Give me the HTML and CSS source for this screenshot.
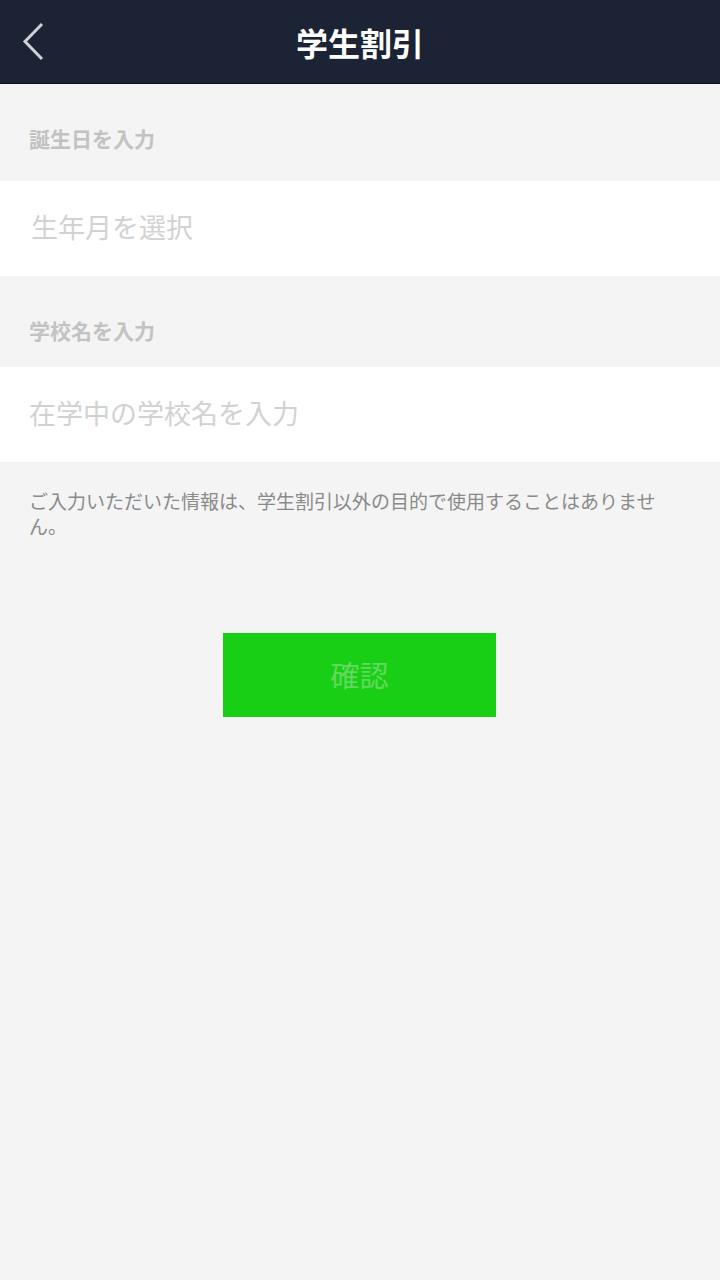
FILE: index.html
```html
<!DOCTYPE html>
<html lang="ja">
<head>
<meta charset="utf-8">
<link rel="stylesheet" href="styles.css">
</head>
<body>
<header class="topbar">
  <svg class="back" width="24" height="40" viewBox="0 0 24 40"><polyline points="20,3 3,20.5 20,38" fill="none" stroke="#cfd1d6" stroke-width="3"/></svg>
  <h1 class="title">学生割引</h1>
</header>
<main>
  <div class="label label-first">誕生日を入力</div>
  <div class="field">生年月を選択</div>
  <div class="label label-second">学校名を入力</div>
  <div class="field field-school">在学中の学校名を入力</div>
  <p class="notice">ご入力いただいた情報は、学生割引以外の目的で使用することはありません。</p>
  <div class="actions"><button class="confirm">確認</button></div>
</main>
</body>
</html>
```
FILE: styles.css
```css
html, body { margin: 0; padding: 0; }
body {
  width: 720px;
  height: 1280px;
  background: #f4f4f4;
  font-family: "Noto Sans CJK JP", "Noto Sans", sans-serif;
}
.topbar {
  position: relative;
  height: 83px;
  background: #1b2334;
  border-bottom: 1px solid #0c1220;
  display: flex;
  align-items: center;
  justify-content: center;
}
.back {
  position: absolute;
  left: 22px;
  top: 21px;
}
.title {
  margin: 0;
  color: #ffffff;
  font-size: 32px;
  font-weight: 700;
  line-height: 40px;
}
.label {
  padding: 0 29px;
  color: #c2c2c2;
  font-size: 21px;
  font-weight: 700;
  line-height: 24px;
  padding-top: 42px;
}
.label-first { height: 55px; }
.label-second { height: 49px; }
.field {
  height: 95px;
  background: #ffffff;
  display: flex;
  align-items: center;
  padding: 0 31px 4px;
  box-sizing: border-box;
  color: #d2d2d2;
  font-size: 27px;
}
.field-school { padding-left: 29px; }
.notice {
  margin: 0;
  padding: 26px 29px 0;
  max-width: 640px;
  color: #8a8a8a;
  font-size: 19px;
  line-height: 25px;
}
.actions {
  display: flex;
  justify-content: center;
  padding-top: 95px;
}
.confirm {
  width: 273px;
  height: 84px;
  margin-left: -1px;
  border: none;
  background: #19cf15;
  color: #62d95e;
  font-family: inherit;
  font-size: 29px;
  padding: 0 0 3px;
}
```
